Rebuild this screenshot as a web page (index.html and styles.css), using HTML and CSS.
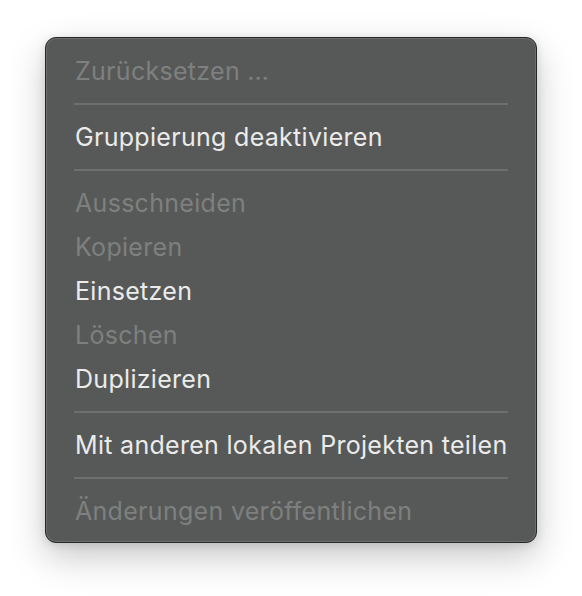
FILE: index.html
```html
<!DOCTYPE html>
<html lang="de">
<head>
<meta charset="utf-8">
<title>Kontextmenü</title>
<link rel="stylesheet" href="styles.css">
</head>
<body>
<div class="stage">
  <ul class="menu">
    <li class="item disabled">Zurücksetzen …</li>
    <li class="sep"></li>
    <li class="item">Gruppierung deaktivieren</li>
    <li class="sep"></li>
    <li class="item disabled">Ausschneiden</li>
    <li class="item disabled">Kopieren</li>
    <li class="item">Einsetzen</li>
    <li class="item disabled">Löschen</li>
    <li class="item">Duplizieren</li>
    <li class="sep"></li>
    <li class="item">Mit anderen lokalen Projekten teilen</li>
    <li class="sep"></li>
    <li class="item disabled">Änderungen veröffentlichen</li>
  </ul>
</div>
</body>
</html>
```

FILE: styles.css
```css
html, body {
  margin: 0;
  padding: 0;
  background: #ffffff;
}

.stage {
  padding: 37px 0 0 45px;
  height: 596px;
  box-sizing: border-box;
}

.menu {
  list-style: none;
  margin: 0;
  box-sizing: border-box;
  width: 492px;
  height: 506px;
  padding: 11px 0 10px;
  background: #575958;
  border: 1px solid #262626;
  border-radius: 11px;
  box-shadow:
    inset 0 0 0 1px rgba(255, 255, 255, 0.13),
    0 14px 36px rgba(0, 0, 0, 0.22),
    0 2px 10px rgba(0, 0, 0, 0.12);
  font-family: Inter, "Noto Sans", sans-serif;
  font-size: 25px;
  color: #ebebeb;
}

.item {
  height: 44px;
  line-height: 44px;
  padding-left: 29px;
  white-space: nowrap;
  letter-spacing: 0.3px;
}

.item.disabled {
  color: #7e807f;
}

.sep {
  height: 22px;
  display: flex;
  align-items: center;
  padding: 0 28px;
}

.sep::before {
  content: "";
  flex: 1;
  height: 2px;
  background: #6d6f6e;
}
```
